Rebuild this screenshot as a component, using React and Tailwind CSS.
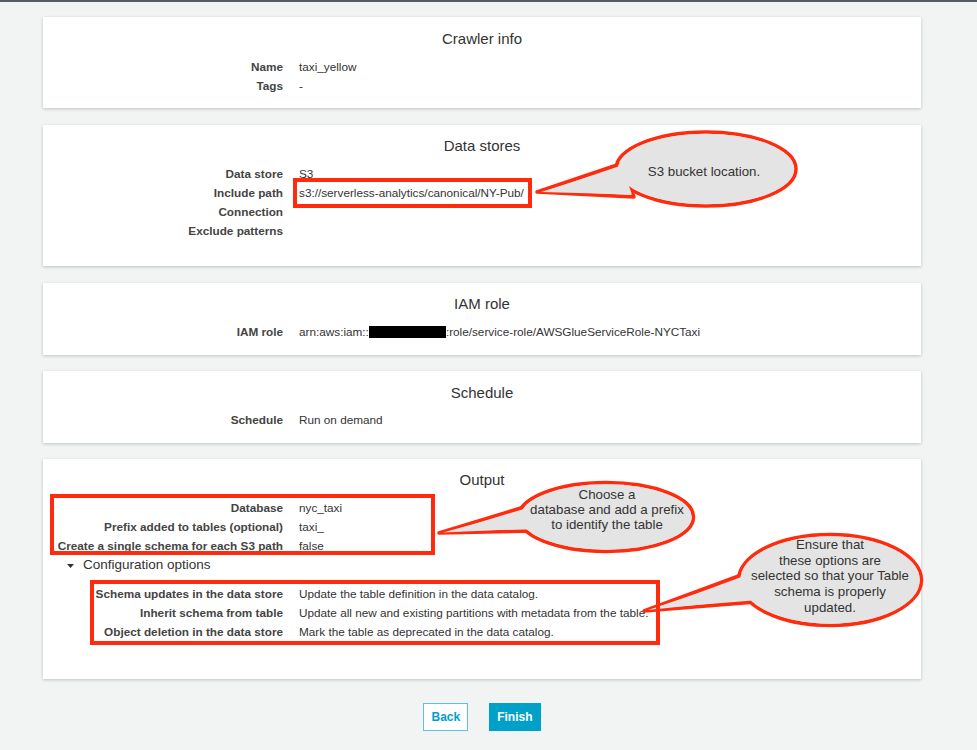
import React from "react";

const RED = "#ff2b0c";

function Row({ label, children }) {
  return (
    <div className="grid grid-cols-[240px_1fr] gap-x-4 text-[11.75px] leading-[19px]">
      <div className="text-right font-bold text-[#444]">{label}</div>
      <div className="text-[#333] whitespace-nowrap">{children}</div>
    </div>
  );
}

function Card({ title, className, children }) {
  return (
    <section
      className={
        "w-[878px] bg-white shadow-[0_1px_3px_rgba(0,28,36,0.22)] " + className
      }
    >
      <h2 className="text-center text-[15px] leading-[20px] text-[#333]">{title}</h2>
      {children}
    </section>
  );
}

function Callouts() {
  return (
    <div className="pointer-events-none absolute left-0 top-0 h-[750px] w-[977px]">
      <svg width="977" height="750" className="absolute left-0 top-0">
        <g stroke={RED} strokeWidth="3.5" strokeLinejoin="round" fill="#e4e4e4">
          <ellipse cx="706" cy="169" rx="90" ry="37" />
          <polygon points="537,192 620,164 634,197" />
          <ellipse cx="606" cy="517" rx="87.5" ry="34.5" />
          <polygon points="439,533 524,507 538,531" />
          <ellipse cx="830" cy="580" rx="91.5" ry="45.5" />
          <polygon points="644,611 744,574 756,602" />
        </g>
        <g fill="#e4e4e4">
          <ellipse cx="706" cy="169" rx="88.2" ry="35.2" />
          <polygon points="541,192 622,166.5 632,194.5" />
          <ellipse cx="606" cy="517" rx="85.7" ry="32.7" />
          <polygon points="443,532.5 526,509.5 536,528.5" />
          <ellipse cx="830" cy="580" rx="89.7" ry="43.7" />
          <polygon points="648,610 746,577 754,599" />
        </g>
      </svg>
      <div className="absolute left-[614px] top-[164px] w-[180px] text-center text-[13.3px] leading-[16px] text-[#333]">
        S3 bucket location.
      </div>
      <div className="absolute left-[517px] top-[487px] w-[180px] text-center text-[13.3px] leading-[15px] text-[#333]">
        Choose a<br />
        database and add a prefix<br />
        to identify the table
      </div>
      <div className="absolute left-[739px] top-[537px] w-[182px] text-center text-[13.3px] leading-[15.7px] text-[#333]">
        Ensure that<br />
        these options are<br />
        selected so that your Table<br />
        schema is properly<br />
        updated.
      </div>
      <div className="absolute left-[293px] top-[178px] h-[30px] w-[239px] border-4" style={{ borderColor: RED }} />
      <div className="absolute left-[50px] top-[494px] h-[61px] w-[385px] border-4" style={{ borderColor: RED }} />
      <div className="absolute left-[90px] top-[580px] h-[65px] w-[570px] border-4" style={{ borderColor: RED }} />
    </div>
  );
}

export default function App() {
  return (
    <div className="relative min-h-[750px] w-full bg-[#f2f3f3] font-['Liberation_Sans',Arial,sans-serif]">
      <div className="h-[2px] bg-[#545b64]" />
      <div className="flex flex-col pl-[43px]">
        <Card title="Crawler info" className="mt-[15px] pt-[12px] pb-[13px]">
          <div className="mt-[8px]">
            <Row label="Name">taxi_yellow</Row>
            <Row label="Tags">-</Row>
          </div>
        </Card>

        <Card title="Data stores" className="mt-[17px] pt-[11px] pb-[26px]">
          <div className="mt-[8px]">
            <Row label="Data store">S3</Row>
            <Row label="Include path">s3://serverless-analytics/canonical/NY-Pub/</Row>
            <Row label="Connection"></Row>
            <Row label="Exclude patterns"></Row>
          </div>
        </Card>

        <Card title="IAM role" className="mt-[17px] pt-[11px] pb-[14px]">
          <div className="mt-[8px]">
            <Row label="IAM role">
              arn:aws:iam::
              <span className="inline-block h-[12px] w-[77px] bg-black align-[-2px]" />
              :role/service-role/AWSGlueServiceRole-NYCTaxi
            </Row>
          </div>
        </Card>

        <Card title="Schedule" className="mt-[16px] pt-[12px] pb-[14px]">
          <div className="mt-[7px]">
            <Row label="Schedule">Run on demand</Row>
          </div>
        </Card>

        <Card title="Output" className="mt-[16px] pt-[11px] pb-[38px]">
          <div className="mt-[7.5px]">
            <Row label="Database">nyc_taxi</Row>
            <Row label="Prefix added to tables (optional)">taxi_</Row>
            <Row label="Create a single schema for each S3 path">false</Row>
          </div>
          <div className="mt-[1px] flex h-[20px] items-center gap-[9px] pl-[24px] text-[13.5px] text-[#333]">
            <svg width="7" height="4" viewBox="0 0 7 4">
              <path d="M0 0 L7 0 L3.5 4 Z" fill="#333" />
            </svg>
            <span>Configuration options</span>
          </div>
          <div className="mt-[8px]">
            <Row label="Schema updates in the data store">Update the table definition in the data catalog.</Row>
            <Row label="Inherit schema from table">Update all new and existing partitions with metadata from the table.</Row>
            <Row label="Object deletion in the data store">Mark the table as deprecated in the data catalog.</Row>
          </div>
        </Card>

        <div className="mt-[24px] flex w-[878px] justify-center gap-[21px]">
          <button className="h-[28px] border border-[#5cc3de] bg-white px-[7px] text-[12px] font-bold text-[#00a1c9]">
            Back
          </button>
          <button className="h-[28px] border border-[#00a1c9] bg-[#00a1c9] px-[7px] text-[12px] font-bold text-white">
            Finish
          </button>
        </div>
      </div>
      <Callouts />
    </div>
  );
}
